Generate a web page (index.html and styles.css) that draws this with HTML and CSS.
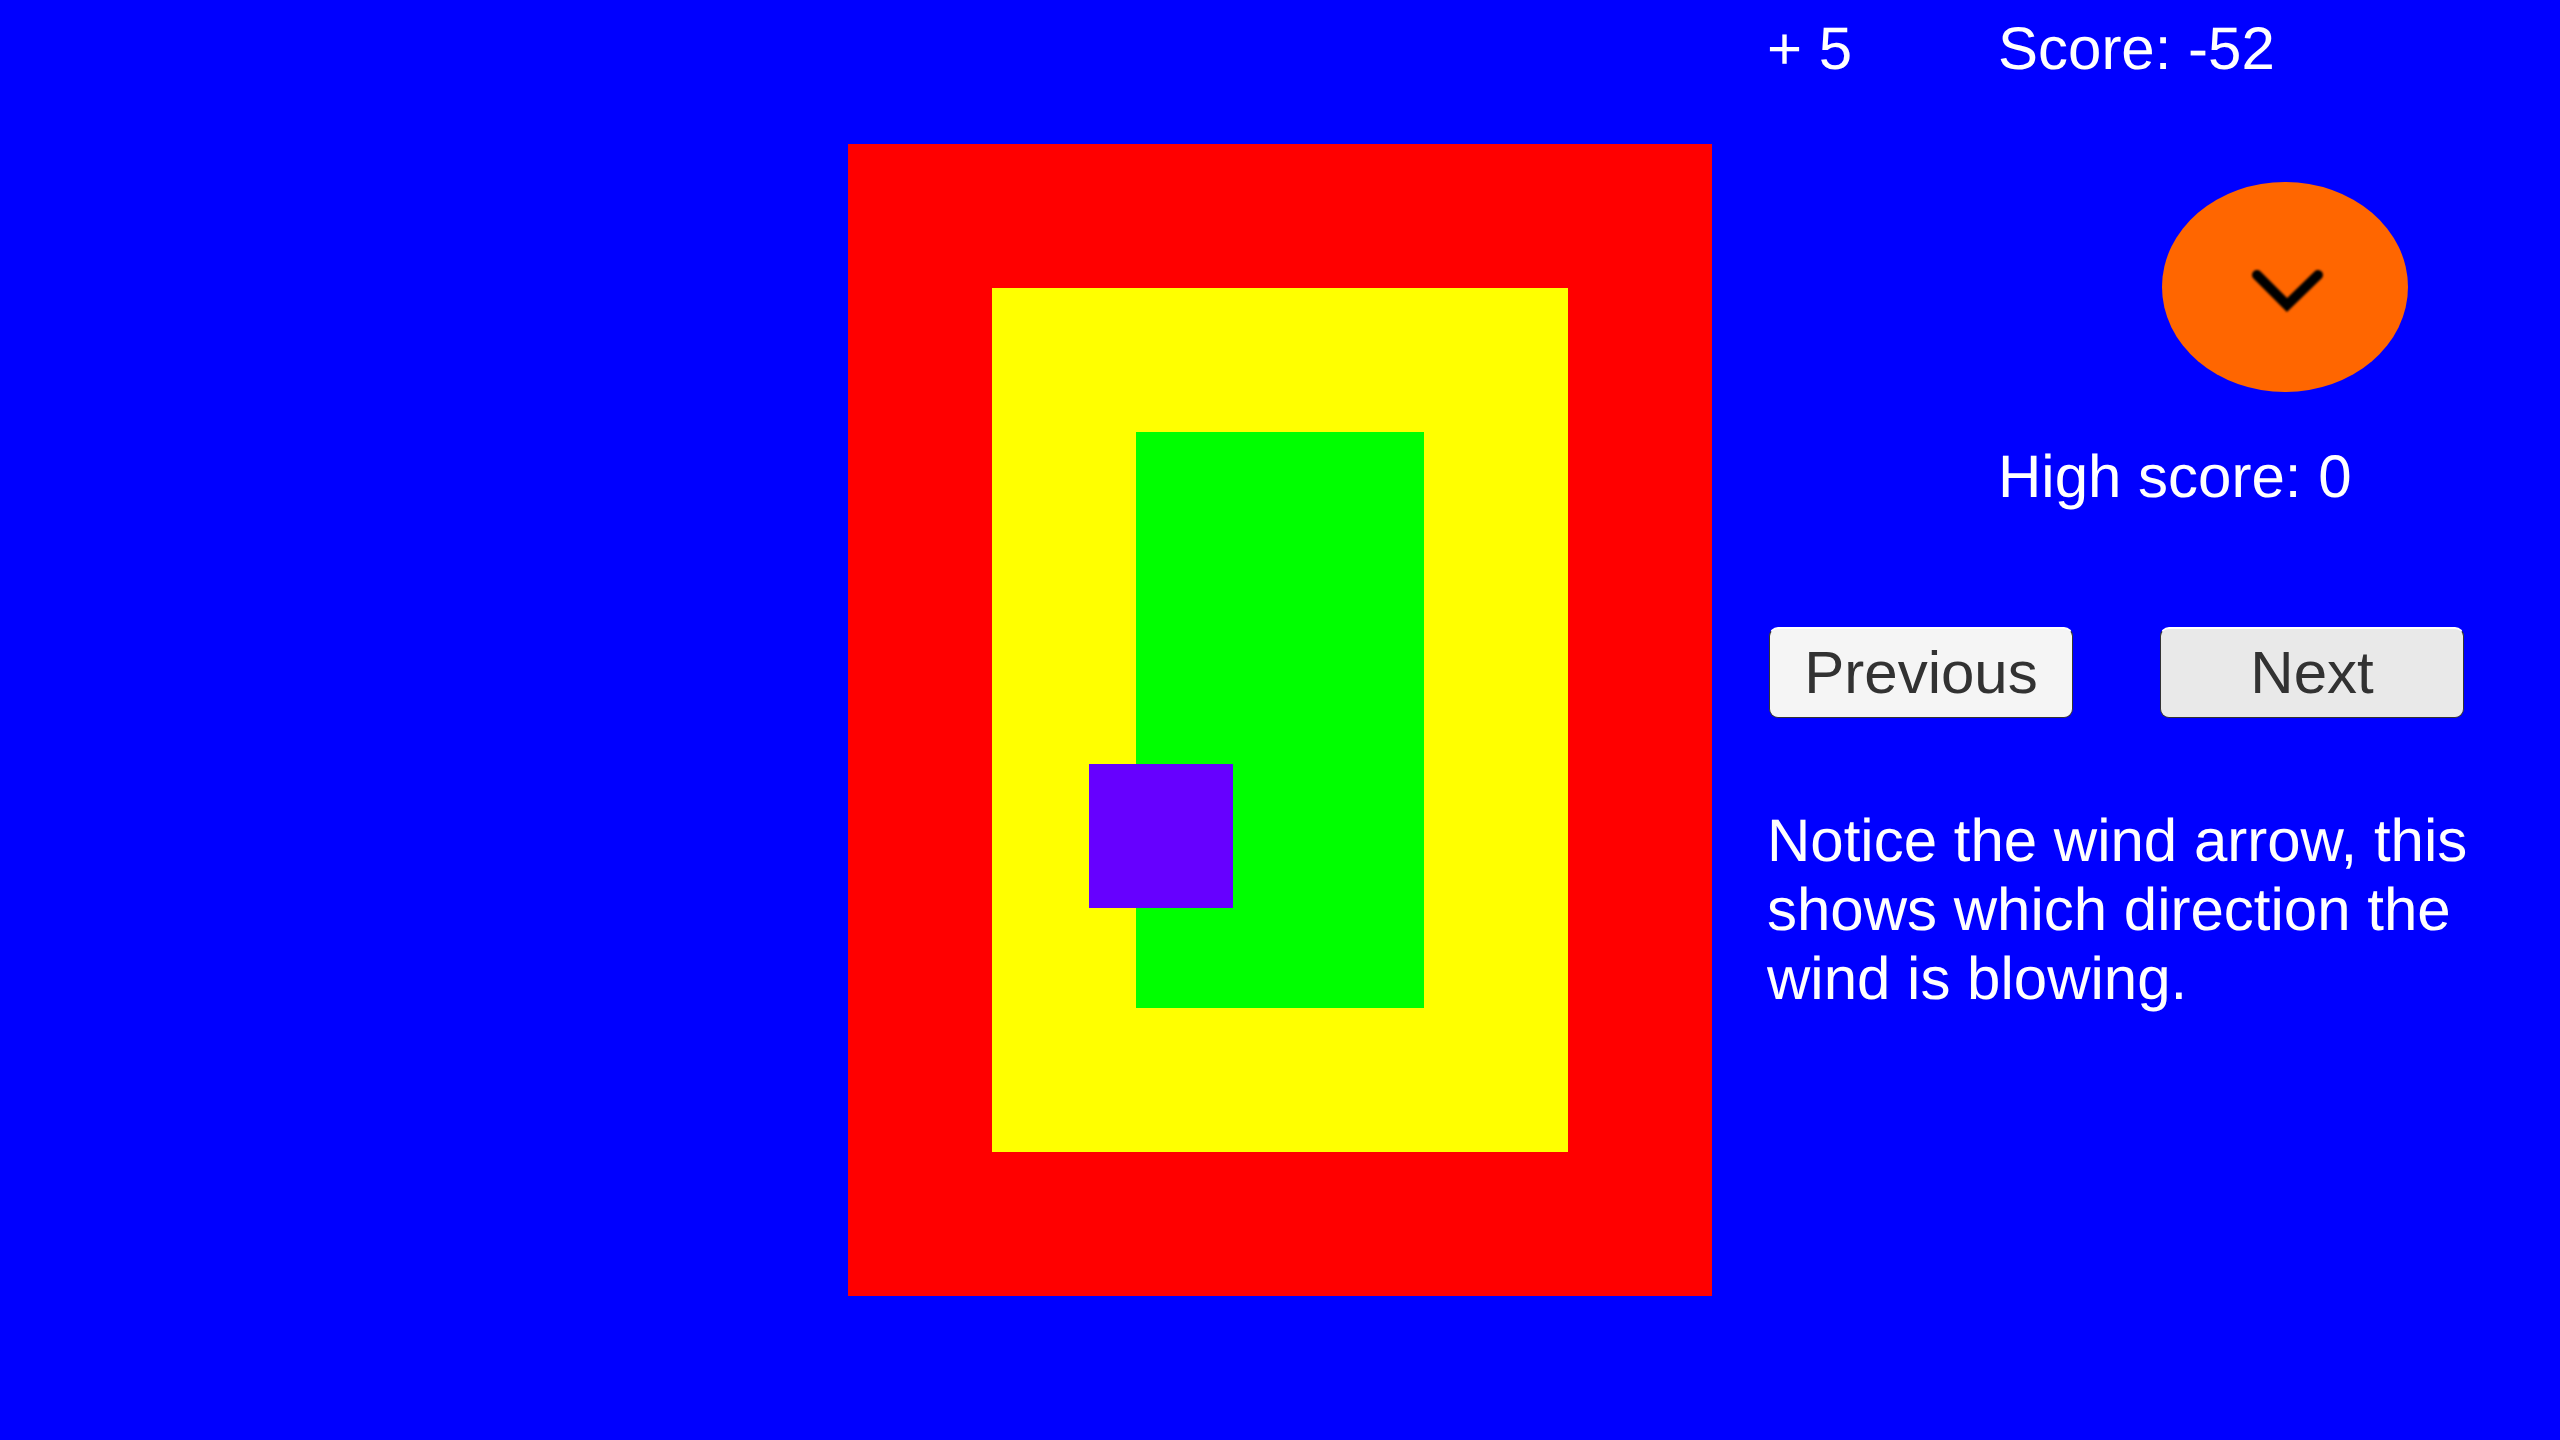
FILE: index.html
```html
<!DOCTYPE html>
<html lang="en">
<head>
<meta charset="utf-8">
<title>Wind game</title>
<link rel="stylesheet" href="styles.css">
</head>
<body>
<main class="stage">
  <section class="board">
    <div class="ring-yellow">
      <div class="ring-green"></div>
    </div>
    <div class="player"></div>
  </section>
  <aside class="panel">
    <div class="scores">
      <span class="delta">+ 5</span>
      <span class="score">Score: -52</span>
    </div>
    <div class="wind">
      <svg class="wind-arrow" viewBox="0 0 80 50" width="80" height="50" aria-hidden="true">
        <path d="M10 10 L40 40 L71 10" fill="none" stroke="#000" stroke-width="10" stroke-linecap="round" stroke-linejoin="miter"/>
      </svg>
    </div>
    <div class="high-score">High score: 0</div>
    <div class="buttons">
      <button class="btn btn-prev">Previous</button>
      <button class="btn btn-next">Next</button>
    </div>
    <p class="message">Notice the wind arrow, this<br>shows which direction the<br>wind is blowing.</p>
  </aside>
</main>
</body>
</html>
```
FILE: styles.css
```css
html, body {
  margin: 0;
  padding: 0;
  height: 100%;
  background: #0000ff;
  overflow: hidden;
}
.stage {
  display: flex;
  align-items: flex-start;
  width: 2560px;
  height: 1440px;
  font-family: "Liberation Sans", Arial, sans-serif;
  color: #fff;
  text-rendering: geometricPrecision;
}
.board {
  position: relative;
  box-sizing: border-box;
  margin: 144px 0 0 848px;
  width: 864px;
  height: 1152px;
  padding: 144px;
  background: #ff0000;
  flex: none;
}
.ring-yellow {
  box-sizing: border-box;
  width: 576px;
  height: 864px;
  padding: 144px;
  background: #ffff00;
}
.ring-green {
  width: 288px;
  height: 576px;
  background: #00ff00;
}
.player {
  position: absolute;
  left: 241px;
  top: 620px;
  width: 144px;
  height: 144px;
  background: #6600ff;
}
.panel {
  margin-left: 55px;
  width: 740px;
  flex: none;
  font-size: 60px;
}
.scores {
  display: flex;
  height: 98px;
  line-height: 98px;
}
.delta {
  width: 231px;
}
.wind {
  display: flex;
  align-items: center;
  justify-content: center;
  margin: 84px 0 0 395px;
  width: 246px;
  height: 210px;
  border-radius: 50%;
  background: #ff6600;
}
.wind-arrow {
  filter: blur(1px);
  margin-left: 4px;
  margin-top: 6px;
}
.high-score {
  margin: 51px 0 0 231px;
  line-height: 68px;
}
.buttons {
  display: flex;
  gap: 87px;
  margin: 116px 0 0 2px;
}
.btn {
  box-sizing: border-box;
  width: 304px;
  height: 91px;
  padding: 0 0 2px;
  border: 1px solid #333;
  border-top: 2px solid #fff;
  border-radius: 9px;
  font: inherit;
  color: #323232;
}
.btn-prev {
  background: #f5f5f5;
}
.btn-next {
  background: #e9e9e9;
}
.message {
  margin: 88px 0 0;
  line-height: 69px;
}
```
